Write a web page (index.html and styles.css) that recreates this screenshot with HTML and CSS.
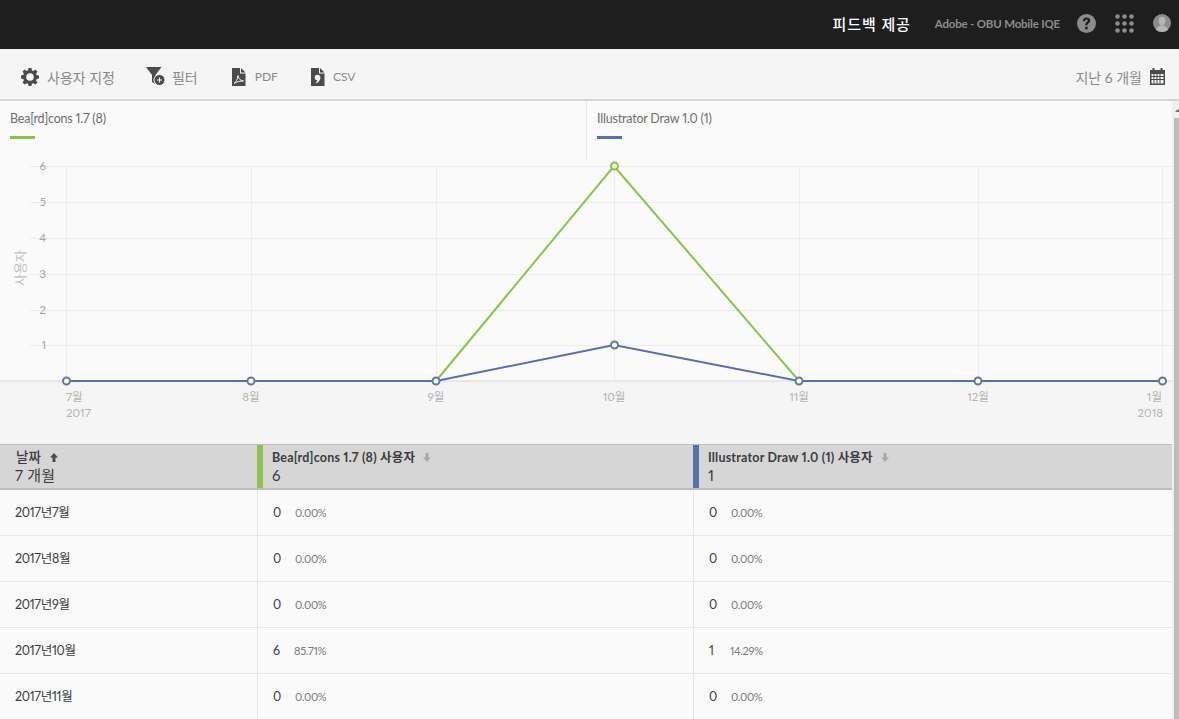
FILE: index.html
```html
<!DOCTYPE html>
<html>
<head>
    <title>피드백 제공</title>
    <link rel="stylesheet" href="styles.css">
</head>
<body>
    <div class="topbar">
        <span class="feedback">피드백 제공</span>
        <span class="org">Adobe - OBU Mobile IQE</span>
        <svg class="top-icon help" width="19" height="19" viewBox="0 0 19 19"><circle cx="9.5" cy="9.5" r="9.5" fill="#8c8c8c"/><path d="M5.800 7.200c0-2.300 1.600-3.700 3.800-3.700s3.600 1.300 3.600 3.100c0 1.500-.9 2.300-1.800 3-.7.500-1 .9-1 1.700H8.200c0-1.500.5-2.300 1.400-3 .7-.5 1.100-.9 1.100-1.500 0-.7-.5-1.200-1.200-1.200-.9 0-1.400.6-1.400 1.600z" fill="#1e1e1e"/><rect x="8.200" y="12.800" width="2.500" height="2.500" fill="#1e1e1e"/></svg>
        <svg class="top-icon apps" width="19" height="19" viewBox="0 0 19 19" fill="#8c8c8c"><circle cx="2.500" cy="2.500" r="2.300"/><circle cx="9.500" cy="2.500" r="2.300"/><circle cx="16.500" cy="2.500" r="2.300"/><circle cx="2.500" cy="9.500" r="2.300"/><circle cx="9.500" cy="9.500" r="2.300"/><circle cx="16.500" cy="9.500" r="2.300"/><circle cx="2.500" cy="16.500" r="2.300"/><circle cx="9.500" cy="16.500" r="2.300"/><circle cx="16.500" cy="16.500" r="2.300"/></svg>
        <svg class="top-icon avatar" width="18" height="18" viewBox="0 0 18 18"><circle cx="9" cy="9" r="9" fill="#8c8c8c"/><ellipse cx="9" cy="7" rx="3.300" ry="4.200" fill="#b5b5b5"/><path d="M3 16c.6-3 3-3.500 4.500-4.500h3c1.500 1 3.900 1.500 4.500 4.500-1.500 1.300-3.700 2-6 2s-4.500-.7-6-2z" fill="#b5b5b5"/></svg>
    </div>

    <div class="toolbar">
        <a class="tool tool-custom">
            <svg width="18" height="18" viewBox="0 0 18 18" fill="#4b4b4b"><path fill-rule="evenodd" d="M7.500 0h3l.4 2.400 1.500.6 2-1.400 2.100 2.100-1.400 2 .6 1.500 2.300.4v3l-2.300.4-.6 1.500 1.400 2-2.100 2.100-2-1.400-1.500.6-.4 2.300h-3l-.4-2.300-1.500-.6-2 1.400-2.100-2.100 1.400-2-.6-1.500L0 10.500v-3l2.300-.4.6-1.500-1.400-2 2.100-2.100 2 1.400 1.500-.6zM9 5.200a3.800 3.800 0 1 0 0 7.600 3.800 3.800 0 0 0 0-7.600z"/></svg>
            <span>사용자 지정</span>
        </a>
        <a class="tool tool-filter">
            <svg width="20" height="19" viewBox="0 0 20 19"><path d="M0 0h15.500L9.500 8v9l-3.500-2V8z" fill="#4b4b4b"/><circle cx="13.500" cy="13" r="5.500" fill="#4b4b4b" stroke="#f5f5f5" stroke-width="1"/><path d="M11 13h5M13.500 10.500v5" stroke="#f5f5f5" stroke-width="1.100"/></svg>
            <span>필터</span>
        </a>
        <a class="tool tool-pdf">
            <svg width="14" height="18" viewBox="0 0 14 18"><path d="M0 0h8v5.500h5.500V18H0z" fill="#4b4b4b"/><path d="M9 0l4.500 4.500H9z" fill="#4b4b4b"/><path d="M2 15.500c2-1 3.500-4 4-8 .5 3 2 5 5.500 5.500-3 0-6.500 .5-9.500 2.500z" fill="none" stroke="#f5f5f5" stroke-width="1"/></svg>
            <span>PDF</span>
        </a>
        <a class="tool tool-csv">
            <svg width="14" height="18" viewBox="0 0 14 18"><path d="M0 0h8v5.500h5.500V18H0z" fill="#4b4b4b"/><path d="M9 0l4.500 4.500H9z" fill="#4b4b4b"/><circle cx="6.500" cy="9.500" r="2.800" fill="#f5f5f5"/><path d="M9.300 9.800c0 3-1.800 5-5 5.700 1.300-1.200 2-2.500 2-4z" fill="#f5f5f5"/></svg>
            <span>CSV</span>
        </a>
        <div class="range">
            <span>지난 6 개월</span>
            <svg width="15" height="17" viewBox="0 0 15 17"><path fill-rule="evenodd" d="M0 2h2.500V0h2v2h6V0h2v2H15v15H0zM1.500 6v2h2V6zm3 0v2h2V6zm3 0v2h2V6zm3 0v2h3V6zm-9 3v2h2V9zm3 0v2h2V9zm3 0v2h2V9zm3 0v2h3V9zm-9 3v3.500h2V12zm3 0v3.500h2V12zm3 0v3.500h2V12zm3 0v3.500h3V12z" fill="#4b4b4b"/></svg>
        </div>
    </div>

    <div class="main">
        <div class="content">
            <div class="legend">
                <div class="legend-item legend-first">
                    <span>Bea[rd]cons 1.7 (8)</span>
                    <i class="swatch green"></i>
                </div>
                <div class="legend-item legend-second">
                    <span>Illustrator Draw 1.0 (1)</span>
                    <i class="swatch blue"></i>
                </div>
            </div>

            <svg class="chart" width="1172" height="284" viewBox="0 160 1172 284">
                <rect x="0" y="381" width="1172" height="63" fill="#f5f5f5"/>
                <g stroke="#ececec" stroke-width="1">
                    <path d="M30 166.500H1172M30 202.500H1172M30 238.500H1172M30 274.500H1172M30 310.500H1172M30 345.500H1172"/>
                    <path d="M66.500 166V381M251.500 166V381M436.500 166V381M614.500 166V381M799.500 166V381M978.500 166V381M1162.500 166V381"/>
                </g>
                <path d="M0 381H1172" stroke="#d8d8d8"/>
                <g class="tick-y">
                    <text x="46" y="170">6</text>
                    <text x="46" y="206">5</text>
                    <text x="46" y="242">4</text>
                    <text x="46" y="278">3</text>
                    <text x="46" y="314">2</text>
                    <text x="46" y="349">1</text>
                </g>
                <text class="axis-title" transform="translate(25 268) rotate(-90)">사용자</text>
                <g class="tick-x">
                    <text x="66" y="401" class="start">7월</text>
                    <text x="251" y="401">8월</text>
                    <text x="436" y="401">9월</text>
                    <text x="614" y="401">10월</text>
                    <text x="799" y="401">11월</text>
                    <text x="978" y="401">12월</text>
                    <text x="1162" y="401" class="end">1월</text>
                    <text x="66" y="417" class="start">2017</text>
                    <text x="1163" y="417" class="end">2018</text>
                </g>
                <polyline class="line-green" points="436,381 614,166 799,381"/>
                <polyline class="line-blue" points="66,381 251,381 436,381 614,345 799,381 978,381 1162,381"/>
                <circle class="dot-green" cx="614.500" cy="166" r="3.500"/>
                <g class="dot-blue">
                    <circle cx="66.500" cy="381" r="3.500"/>
                    <circle cx="251" cy="381" r="3.500"/>
                    <circle cx="436" cy="381" r="3.500"/>
                    <circle cx="614.500" cy="345" r="3.500"/>
                    <circle cx="799" cy="381" r="3.500"/>
                    <circle cx="978" cy="381" r="3.500"/>
                    <circle cx="1162.500" cy="381" r="3.500"/>
                </g>
            </svg>

            <div class="table">
                <div class="row head">
                    <div class="cell date-head">
                        <div class="title">날짜 <svg class="sort" width="8" height="9" viewBox="0 0 8 9"><path d="M4 0l4 4.500H5.500V9h-3V4.500H0z" fill="#4b4b4b"/></svg></div>
                        <div class="total">7 개월</div>
                    </div>
                    <div class="cell mark-green">
                        <div class="title">Bea[rd]cons 1.7 (8) 사용자 <svg class="sort" width="8" height="9" viewBox="0 0 8 9"><path d="M4 9l4-4.500H5.500V0h-3v4.500H0z" fill="#a8a8a8"/></svg></div>
                        <div class="total">6</div>
                    </div>
                    <div class="cell mark-blue">
                        <div class="title">Illustrator Draw 1.0 (1) 사용자 <svg class="sort" width="8" height="9" viewBox="0 0 8 9"><path d="M4 9l4-4.500H5.500V0h-3v4.500H0z" fill="#a8a8a8"/></svg></div>
                        <div class="total">1</div>
                    </div>
                </div>
                <div class="row">
                    <div class="cell">2017년7월</div>
                    <div class="cell"><b>0</b><small>0.00%</small></div>
                    <div class="cell"><b>0</b><small>0.00%</small></div>
                </div>
                <div class="row">
                    <div class="cell">2017년8월</div>
                    <div class="cell"><b>0</b><small>0.00%</small></div>
                    <div class="cell"><b>0</b><small>0.00%</small></div>
                </div>
                <div class="row">
                    <div class="cell">2017년9월</div>
                    <div class="cell"><b>0</b><small>0.00%</small></div>
                    <div class="cell"><b>0</b><small>0.00%</small></div>
                </div>
                <div class="row">
                    <div class="cell">2017년10월</div>
                    <div class="cell"><b>6</b><small>85.71%</small></div>
                    <div class="cell"><b>1</b><small>14.29%</small></div>
                </div>
                <div class="row">
                    <div class="cell">2017년11월</div>
                    <div class="cell"><b>0</b><small>0.00%</small></div>
                    <div class="cell"><b>0</b><small>0.00%</small></div>
                </div>
            </div>
        </div>
        <div class="scrollbar">
            <div class="scroll-arrow"></div>
            <div class="thumb"></div>
        </div>
    </div>
</body>
</html>
```

FILE: styles.css
```css
html, body {
    height: 100%;
}
body {
    font-family: Lato, "Noto Sans CJK KR", sans-serif;
    font-variant-numeric: proportional-nums;
    margin: 0;
    padding: 0;
    height: 719px;
    overflow: hidden;
    background-color: #fafafa;
    color: #4b4b4b;
    display: flex;
    flex-direction: column;
}
.topbar {
    height: 49px;
    flex: none;
    box-sizing: border-box;
    background-color: #1e1e1e;
    display: flex;
    align-items: center;
    justify-content: flex-end;
    padding: 0 8px 3px 0;
}
.feedback {
    color: #fff;
    font-size: 15px;
    font-weight: 500;
    letter-spacing: 0.9px;
    margin-right: 24px;
}
.org {
    color: #8c8c8c;
    font-size: 11.5px;
    font-weight: 700;
    letter-spacing: -0.2px;
    margin-right: 17px;
}
.top-icon {
    display: block;
}
.apps {
    margin-left: 19px;
}
.avatar {
    margin-left: 19px;
}
.toolbar {
    height: 52px;
    flex: none;
    box-sizing: border-box;
    background-color: #f5f5f5;
    border-bottom: 2px solid #d4d4d4;
    display: flex;
    align-items: center;
    padding: 5px 14px 0 21px;
    font-size: 14px;
    color: #8a8a8a;
}
.tool {
    display: flex;
    align-items: center;
}
.tool svg {
    display: block;
}
.tool-custom {
    gap: 8px;
    margin-right: 31px;
}
.tool-filter {
    gap: 6px;
    margin-right: 34px;
}
.tool-pdf {
    gap: 9px;
    margin-right: 33px;
    font-size: 12px;
}
.tool-csv {
    gap: 8px;
    font-size: 12px;
}
.range {
    margin-left: auto;
    display: flex;
    align-items: center;
    gap: 8px;
}
.main {
    flex: 1;
    display: flex;
    min-height: 0;
}
.content {
    width: 1172px;
    flex: none;
}
.legend {
    display: flex;
    height: 59px;
    font-size: 12.5px;
    letter-spacing: -0.2px;
    color: #6e6e6e;
}
.legend-item {
    box-sizing: border-box;
    padding: 10px 0 0 10px;
}
.legend-item span {
    display: block;
    line-height: 16px;
}
.legend-first {
    width: 587px;
    border-right: 1px solid #e8e8e8;
}
.swatch {
    display: block;
    width: 25px;
    height: 3px;
    margin-top: 9px;
}
.green {
    background-color: #8cc348;
}
.blue {
    background-color: #5a6fad;
}
.chart {
    display: block;
}
.chart text {
    font-size: 11.5px;
    fill: #b3b3b3;
    text-anchor: middle;
}
.chart .tick-y text {
    text-anchor: end;
    fill: #a5a5a5;
}
.chart .tick-x text.start {
    text-anchor: start;
}
.chart .tick-x text.end {
    text-anchor: end;
}
.chart .axis-title {
    font-size: 13px;
    fill: #c0c0c0;
}
.line-green, .line-blue {
    fill: none;
    stroke-width: 2;
}
.line-green {
    stroke: #8cc348;
}
.line-blue {
    stroke: #5a6fad;
}
.dot-green {
    fill: #fafafa;
    stroke: #8cc348;
    stroke-width: 2;
}
.dot-blue circle {
    fill: #fafafa;
    stroke: #5f7a9c;
    stroke-width: 2;
}
.row {
    display: grid;
    grid-template-columns: 257px 436px 479px;
    height: 46px;
    box-sizing: border-box;
    border-bottom: 1px solid #e6e6e6;
    font-size: 12.5px;
    letter-spacing: -0.3px;
    color: #3c3c3c;
}
.cell {
    display: flex;
    align-items: center;
    box-sizing: border-box;
    padding-left: 15px;
    border-left: 1px solid #e6e6e6;
}
.cell:first-child {
    padding-left: 15px;
    padding-bottom: 2px;
    border-left: none;
}
.cell b {
    font-weight: 400;
    font-size: 12.5px;
    margin-right: 14px;
    min-width: 7px;
}
.cell small {
    font-size: 11px;
    color: #7a7a7a;
}
.head {
    background-color: #d6d6d6;
    border-top: 1px solid #bdbdbd;
    border-bottom: 2px solid #bdbdbd;
    letter-spacing: 0.2px;
}
.head .cell {
    display: block;
    padding-top: 4px;
    border-left: none;
}
.head .title {
    font-size: 12.5px;
    font-weight: 700;
    line-height: 17px;
}
.head .total {
    font-size: 15px;
    line-height: 19px;
}
.date-head .title {
    font-size: 13.5px;
    padding-left: 1px;
    font-weight: 500;
}
.mark-green {
    border-left: 6px solid #8cc348 !important;
    padding-left: 9px;
}
.mark-blue {
    border-left: 6px solid #5a6fad !important;
    padding-left: 9px;
}
.sort {
    margin-left: 5px;
}
.scrollbar {
    flex: 1;
    background-color: #f0f0f0;
    padding: 8px 0 0 2px;
    overflow: hidden;
}
.scroll-arrow {
    width: 0;
    height: 0;
    margin: 0 0 6px 1px;
    border-left: 3px solid transparent;
    border-right: 3px solid transparent;
    border-bottom: 3px solid #6e6e6e;
}
.thumb {
    height: 100%;
    background-color: #bdbdbd;
}
```
